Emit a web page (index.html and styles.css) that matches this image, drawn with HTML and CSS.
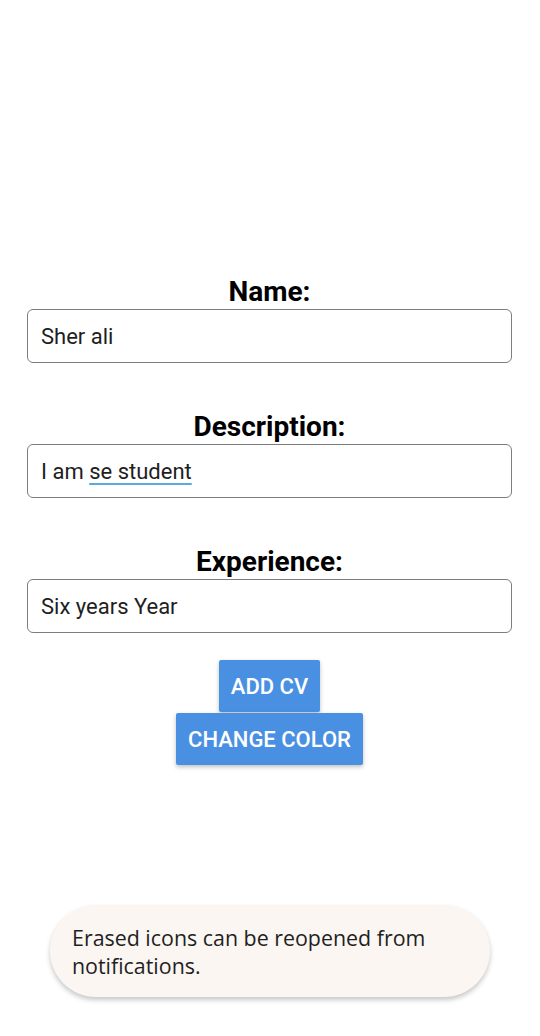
FILE: index.html
```html
<!DOCTYPE html>
<html>
<head>
<meta charset="utf-8">
<link rel="stylesheet" href="styles.css">
</head>
<body>
<main class="form">
  <section class="field">
    <div class="label">Name:</div>
    <div class="box">Sher ali</div>
  </section>
  <section class="field">
    <div class="label">Description:</div>
    <div class="box">I am <span class="spell">se student</span></div>
  </section>
  <section class="field">
    <div class="label">Experience:</div>
    <div class="box">Six years Year</div>
  </section>
  <div class="actions">
    <button class="btn">ADD CV</button>
    <button class="btn">CHANGE COLOR</button>
  </div>
</main>
<div class="toast">Erased icons can be reopened from notifications.</div>
</body>
</html>
```
FILE: styles.css
```css
html, body {
  margin: 0;
  padding: 0;
  background: #ffffff;
}
body {
  width: 540px;
  height: 1036px;
  position: relative;
  overflow: hidden;
  font-family: Roboto, "Liberation Sans", sans-serif;
}
.form {
  padding: 276px 28px 0 27px;
  display: flex;
  flex-direction: column;
}
.field {
  display: flex;
  flex-direction: column;
  margin-bottom: 48px;
}
.field:last-of-type {
  margin-bottom: 27px;
}
.label {
  text-align: center;
  font-weight: 700;
  font-size: 28px;
  line-height: 32px;
  color: #000;
  margin-bottom: 1px;
}
.box {
  height: 52px;
  border: 1px solid #7d7d7d;
  border-radius: 6px;
  padding: 0 13px;
  display: flex;
  align-items: center;
  font-size: 22px;
  color: #1e1e1e;
  white-space: pre;
}
.spell {
  text-decoration: underline;
  text-decoration-color: #5eaadb;
  text-decoration-thickness: 2px;
  text-underline-offset: 4px;
}
.actions {
  display: flex;
  flex-direction: column;
  align-items: center;
}
.btn {
  border: none;
  background: #4a90e2;
  color: #fff;
  font-family: Roboto, "Liberation Sans", sans-serif;
  font-weight: 500;
  font-size: 22px;
  height: 52px;
  padding: 0 12px;
  border-radius: 2px;
  box-shadow: 0 2px 4px rgba(0,0,0,0.25);
}
.btn + .btn {
  margin-top: 1px;
}
.toast {
  position: absolute;
  left: 50px;
  top: 905px;
  width: 440px;
  box-sizing: border-box;
  height: 92px;
  padding: 19px 22px 17px 22px;
  border-radius: 46px;
  background: #fbf6f2;
  box-shadow: 0 3px 5px rgba(0,0,0,0.22);
  font-family: "Open Sans", Roboto, sans-serif;
  font-size: 21.4px;
  line-height: 28px;
  color: #1f1f1f;
}
```
